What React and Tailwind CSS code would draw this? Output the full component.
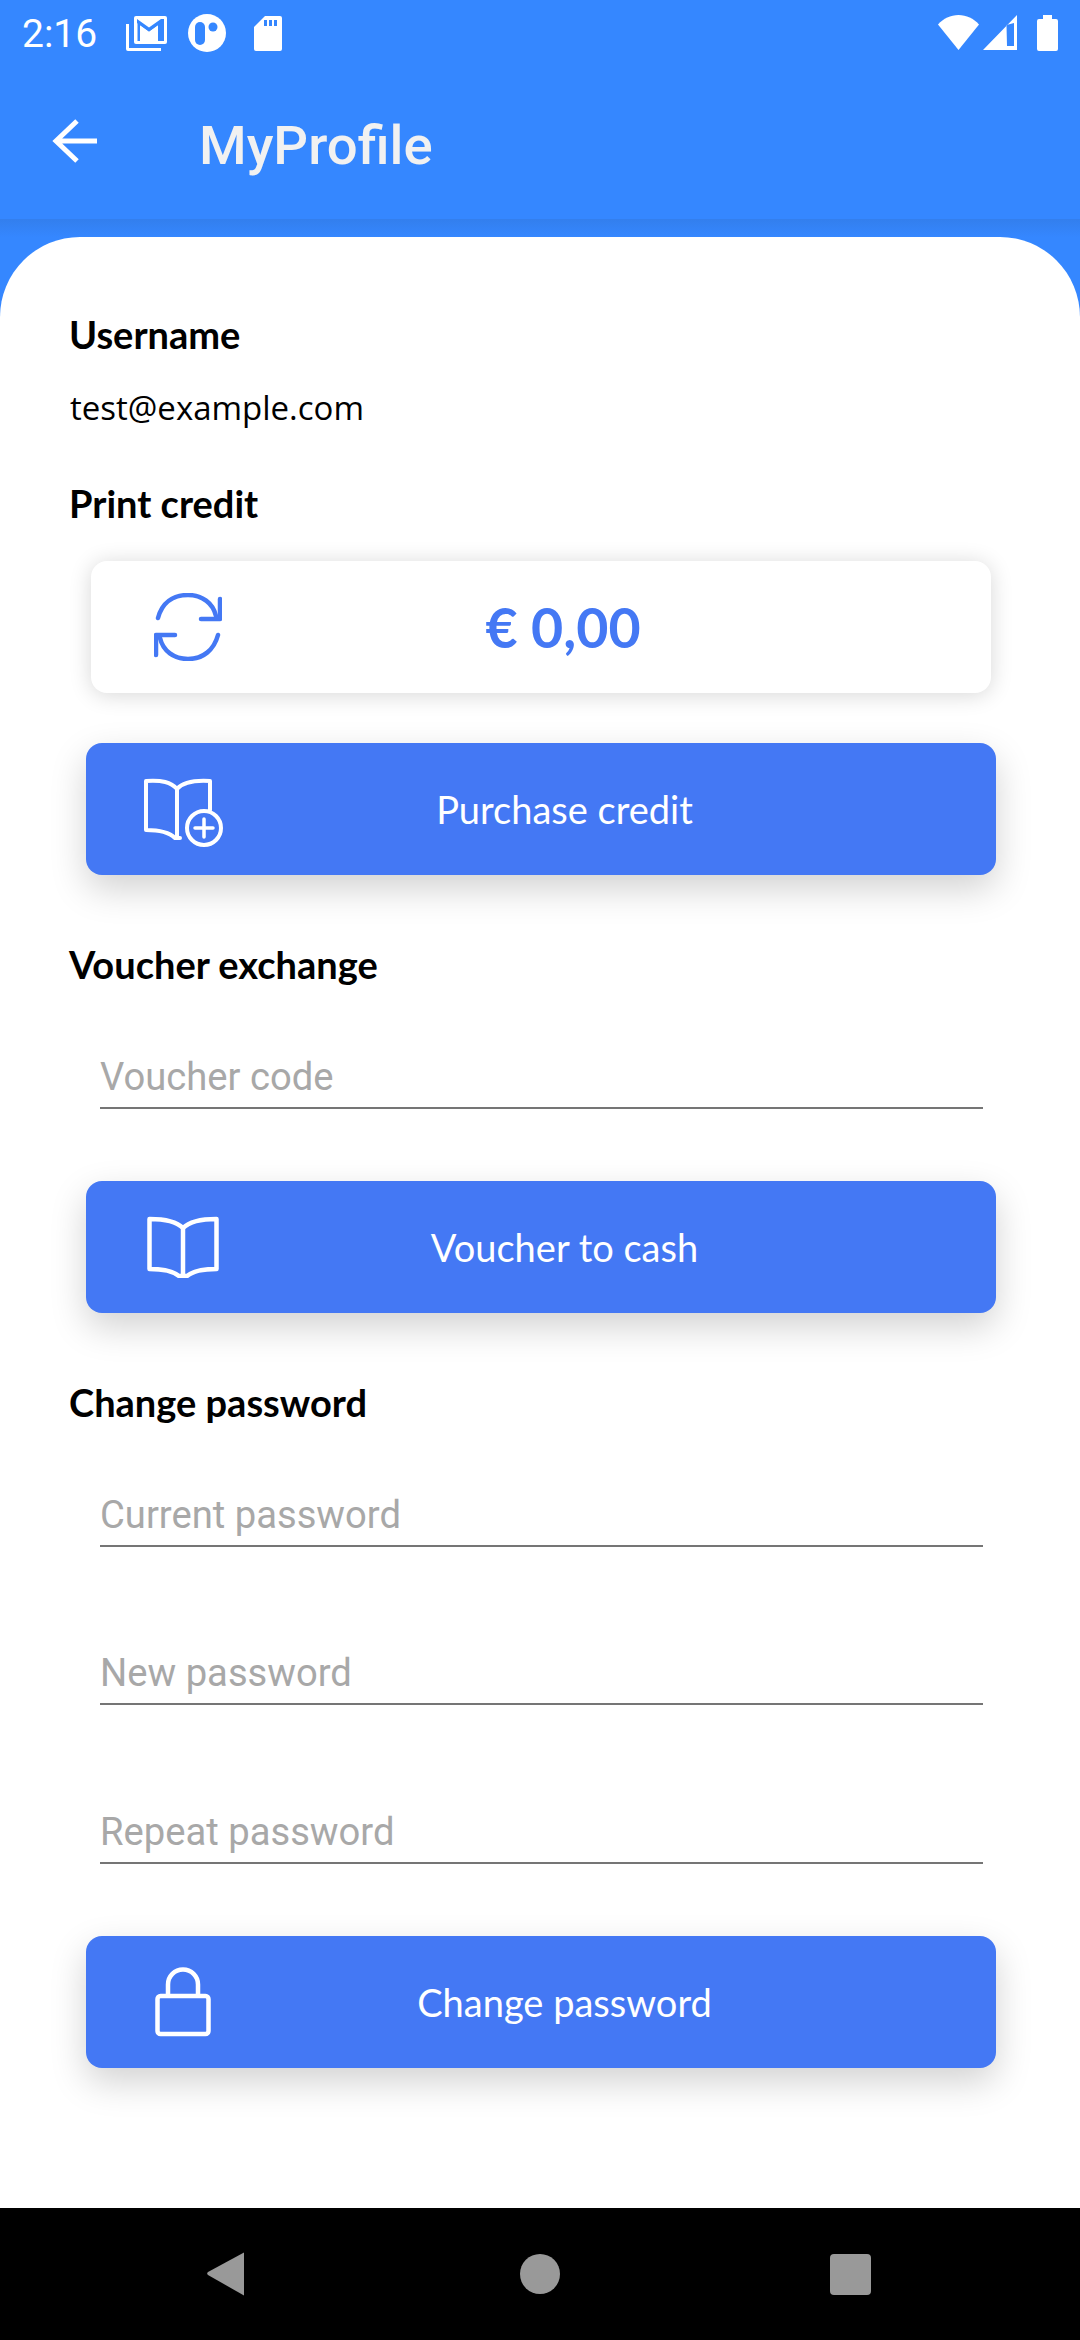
import React from "react";

const lato = "font-['Lato',sans-serif]";
const roboto = "font-['Roboto',sans-serif]";

function StatusBar() {
    return (
        <div className="h-[67px] flex items-start justify-between">
            <div className="flex items-start">
                <span className={`ml-[22px] mt-[11px] text-[39px] leading-[46px] text-white ${roboto}`}>2:16</span>
                <svg className="ml-[29px] mt-[16px]" width="41" height="35" viewBox="0 0 41 35" fill="none">
                    <path d="M0 8h3v24h32v3H2a2 2 0 0 1-2-2z" fill="white" />
                    <rect x="8" y="0" width="33" height="28" rx="2" fill="white" />
                    <path d="M11 25V7l12 8.500L35 7v18h3V3h-3L23 11.500 11 3H11z" fill="#3587ff" />
                    <path d="M12 5.500h-.5V25H14V9l9 6.500L32 9v16h3V5.500h-1L23 13z" fill="#3587ff" />
                </svg>
                <svg className="ml-[21px] mt-[14px]" width="38" height="38" viewBox="0 0 38 38">
                    <circle cx="19" cy="19" r="19" fill="white" />
                    <rect x="7" y="8" width="10" height="23" rx="5" fill="#3587ff" />
                    <circle cx="25" cy="13" r="4.500" fill="#3587ff" />
                </svg>
                <svg className="ml-[28px] mt-[16px]" width="28" height="35" viewBox="0 0 28 35">
                    <path d="M11 0h15a2 2 0 0 1 2 2v31a2 2 0 0 1-2 2H2a2 2 0 0 1-2-2V11z" fill="white" />
                    <path d="M10 4h3v6h-3zM15 4h3v6h-3zM20 4h3v6h-3z" fill="#3587ff" />
                </svg>
            </div>
            <div className="flex items-start">
                <svg className="mt-[15px]" width="41" height="35" viewBox="0 0 41 35">
                    <path d="M0 9.500C5.500 3.500 12.500 0 20.500 0S35.500 3.500 41 9.500L20.500 35z" fill="white" />
                </svg>
                <svg className="ml-[4px] mt-[15px]" width="34" height="35" viewBox="0 0 34 35">
                    <path fillRule="evenodd" d="M34 0v35H0zM23.500 10 24 31h7V8z" fill="white" />
                </svg>
                <svg className="ml-[20px] mr-[22px] mt-[15px]" width="21" height="36" viewBox="0 0 21 36">
                    <path d="M6 0h9v4h4a2 2 0 0 1 2 2v28a2 2 0 0 1-2 2H2a2 2 0 0 1-2-2V6a2 2 0 0 1 2-2h4z" fill="white" />
                </svg>
            </div>
        </div>
    );
}

function Toolbar() {
    return (
        <div className="h-[153px] flex items-start border-b border-[#337fee]">
            <svg className="ml-[52px] mt-[51px]" width="46" height="46" viewBox="0 0 46 46" fill="none">
                <path d="M45 23H5M25 3 4 23l21 20" stroke="white" strokeWidth="5" />
            </svg>
            <span className={`ml-[101px] mt-[47px] text-[54.500px] leading-[62px] font-medium text-[#f1f1f1] ${roboto}`}>
                MyProfile
            </span>
        </div>
    );
}

function Label({ children, className = "" }) {
    return (
        <div className={`ml-[69px] text-[38px] leading-[44px] font-bold text-black ${lato} ${className}`}>
            {children}
        </div>
    );
}

function Field({ placeholder, className = "" }) {
    return (
        <div className={`ml-[100px] mr-[97px] h-[64px] pt-[2px] border-b-2 border-[#757575] flex items-center ${className}`}>
            <span className={`text-[38.200px] leading-[46px] text-[#a8a8a8] ${roboto}`}>{placeholder}</span>
        </div>
    );
}

function ActionButton({ icon, label, className = "" }) {
    return (
        <div className={`ml-[86px] mr-[84px] h-[132px] rounded-[16px] bg-[#4478f4] flex items-center shadow-[0_14px_36px_rgba(0,0,0,0.18)] ${className}`}>
            <div className="ml-[58px] w-[74px] shrink-0 flex items-center">{icon}</div>
            <span className={`flex-1 mr-[85px] text-center text-[38px] leading-[44px] text-white ${lato}`}>{label}</span>
        </div>
    );
}

const BookPlusIcon = (
    <svg className="mt-[7px] shrink-0" width="80" height="70" viewBox="0 0 80 70" fill="none" stroke="white" strokeWidth="4" strokeLinejoin="round" strokeLinecap="round">
        <path d="M66 32V3C50 2 39 4 33 11 27 4 18 2 2 3v49c14 0 23 2 29 8h5" />
        <path d="M33 11v49" />
        <circle cx="60" cy="50" r="17" />
        <path d="M60 41v18M51 50h18" strokeWidth="3.500" />
    </svg>
);

const BookIcon = (
    <svg className="ml-[3px] shrink-0" width="72" height="62" viewBox="0 0 72 62" fill="none" stroke="white" strokeWidth="4.500" strokeLinejoin="round">
        <path d="M2.500 3C17 3 29 5 36 12 43 5 55 3 69.500 3v50C55 53 46 55 40 60h-8C26 55 17 53 2.500 53z" />
        <path d="M36 12v48" />
    </svg>
);

const LockIcon = (
    <svg className="ml-[11px] shrink-0" width="56" height="70" viewBox="0 0 56 70" fill="none" stroke="white" strokeWidth="4.500" strokeLinejoin="round">
        <rect x="2.500" y="29" width="51" height="38" rx="3" />
        <path d="M13 29V17.500a15 15 0 0 1 30 0V29" />
    </svg>
);

const RefreshIcon = (
    <svg width="68" height="68" viewBox="0 0 68 68" fill="none" stroke="#4478f4" strokeWidth="4.500" strokeLinecap="round" strokeLinejoin="round">
        <path d="M4 25C8 10 19 2 34 2c14 0 25 8 28 21" />
        <path d="M66 6v20H47" />
        <path d="M64 42C60 57 49 66 34 66 20 66 9 58 6 45" />
        <path d="M2 62V42h19" />
    </svg>
);

function CreditCard() {
    return (
        <div className="ml-[91px] mr-[89px] mt-[36px] h-[132px] rounded-[16px] bg-white flex items-center shadow-[0_2px_22px_rgba(0,0,0,0.16)]">
            <div className="ml-[63px] w-[68px] shrink-0">{RefreshIcon}</div>
            <span className={`flex-1 mr-[87px] text-center text-[55.500px] leading-[60px] font-bold text-[#4478f4] ${lato}`}>€ 0,00</span>
        </div>
    );
}

export default function App() {
    return (
        <div className="w-[1080px] h-[2340px] flex flex-col bg-[#3587ff] overflow-hidden">
            <StatusBar />
            <Toolbar />
            <div className="h-[17px] bg-gradient-to-b from-[#337fee] to-[#3587ff]" />

            <div className="flex-1 rounded-t-[80px] bg-white pt-[75px]">
                <Label>Username</Label>
                <div className="ml-[70px] mt-[30px] text-[33px] leading-[44px] text-black font-['Open_Sans',sans-serif]">
                    test@example.com
                </div>
                <Label className="mt-[51px]">Print credit</Label>
                <CreditCard />
                <ActionButton className="mt-[50px]" icon={BookPlusIcon} label="Purchase credit" />

                <Label className="mt-[67px]">Voucher exchange</Label>
                <Field className="mt-[59px]" placeholder="Voucher code" />
                <ActionButton className="mt-[72px]" icon={BookIcon} label="Voucher to cash" />

                <Label className="mt-[67px]">Change password</Label>
                <Field className="mt-[59px]" placeholder="Current password" />
                <Field className="mt-[94px]" placeholder="New password" />
                <Field className="mt-[95px]" placeholder="Repeat password" />
                <ActionButton className="mt-[72px]" icon={LockIcon} label="Change password" />
            </div>

            <div className="h-[132px] bg-black flex items-center">
                <svg className="ml-[206px]" width="40" height="46" viewBox="0 0 40 46">
                    <path d="M38 1.500 2 21a2 2 0 0 0 0 3l36 20.500z" fill="#999999" />
                </svg>
                <div className="ml-[274px] w-[40px] h-[40px] rounded-full bg-[#999999]" />
                <div className="ml-[270px] w-[41px] h-[41px] rounded-[4px] bg-[#999999]" />
            </div>
        </div>
    );
}
